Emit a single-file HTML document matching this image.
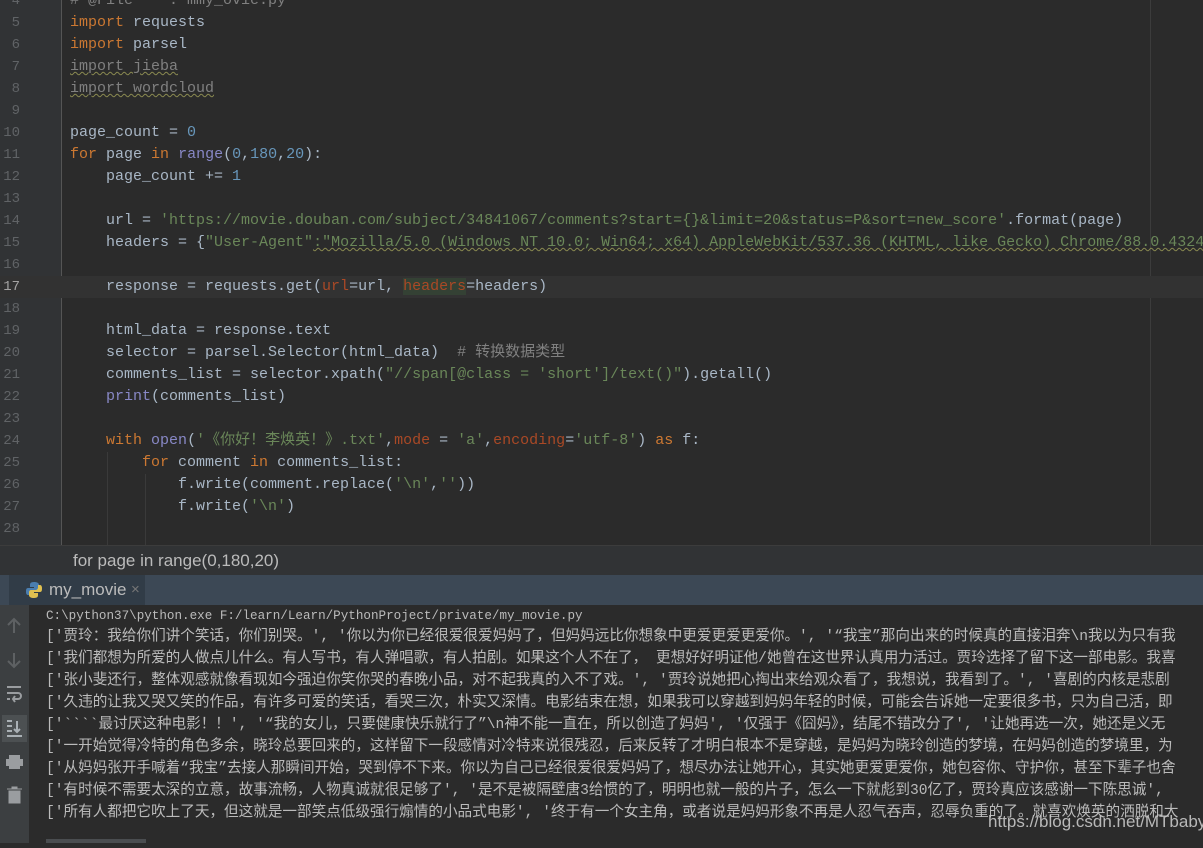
<!DOCTYPE html>
<html><head><meta charset="utf-8"><style>
*{margin:0;padding:0;box-sizing:border-box}
body{width:1203px;height:843px;overflow:hidden;background:#2b2b2b;position:relative;font-family:"Liberation Mono","Noto Sans CJK SC",monospace}
#ed{position:absolute;left:0;top:0;width:1203px;height:545px;background:#2b2b2b;overflow:hidden}
#gut{position:absolute;left:0;top:0;width:62px;height:545px;background:#313335;border-right:1px solid #555}
.l{position:absolute;left:0;height:22px;width:1203px;font-size:15px;line-height:22px;white-space:pre;color:#a9b7c6}
.n{position:absolute;left:0;width:20px;text-align:right;color:#606366;font-size:14px}
.c{position:absolute;left:70px}
.k{color:#cc7832}.s{color:#6a8759}.d{color:#6897bb}.b{color:#8888c6}.m{color:#808080}.p{color:#aa4926}
.cur{background:#323232}.cur .n{color:#a4a3a3}
.wv{text-decoration:underline wavy #8a8a50;text-decoration-thickness:1px}
#bc{position:absolute;left:0;top:545px;width:1203px;height:30px;background:#313335;border-top:1px solid #3c3c3c;color:#bbb;font-family:"Liberation Sans",sans-serif;font-size:17px;line-height:30px;padding-left:73px}
#tb{position:absolute;left:0;top:575px;width:1203px;height:30px;background:#3c4855}
#tab{position:absolute;left:9px;top:0;width:136px;height:30px;background:#313c47;color:#bbb;font-family:"Liberation Sans",sans-serif;font-size:17px;line-height:30px;padding-left:40px;white-space:nowrap}
#tool{position:absolute;left:0;top:605px;width:29px;height:238px;background:#3c3f41}
#con{position:absolute;left:29px;top:605px;width:1174px;height:238px;background:#2b2b2b;overflow:hidden}
.r{position:absolute;left:17px;white-space:pre;color:#bbbbbb;font-size:14.6px;line-height:22px}
#wm{position:absolute;left:988px;top:812px;color:#c8c8c8;font-family:"Liberation Sans",sans-serif;font-size:17px;opacity:.9}
</style></head><body>
<div id="ed">
<div id="gut"></div>
<div style="position:absolute;left:1150px;top:0;width:1px;height:545px;background:#3c3c3c"></div>
<div style="position:absolute;left:107px;top:452px;width:1px;height:93px;background:#3a3a3a"></div>
<div style="position:absolute;left:145px;top:474px;width:1px;height:71px;background:#3a3a3a"></div>
<div class="l" style="top:-10px"><span class="n">4</span><span class="c m"># @File    : mmy_ovie.py</span></div>
<div class="l" style="top:12px"><span class="n">5</span><span class="c"><span class="k">import</span> requests</span></div>
<div class="l" style="top:34px"><span class="n">6</span><span class="c"><span class="k">import</span> parsel</span></div>
<div class="l" style="top:56px"><span class="n">7</span><span class="c m wv">import jieba</span></div>
<div class="l" style="top:78px"><span class="n">8</span><span class="c m wv">import wordcloud</span></div>
<div class="l" style="top:100px"><span class="n">9</span></div>
<div class="l" style="top:122px"><span class="n">10</span><span class="c">page_count = <span class="d">0</span></span></div>
<div class="l" style="top:144px"><span class="n">11</span><span class="c"><span class="k">for</span> page <span class="k">in</span> <span class="b">range</span>(<span class="d">0</span>,<span class="d">180</span>,<span class="d">20</span>):</span></div>
<div class="l" style="top:166px"><span class="n">12</span><span class="c">    page_count += <span class="d">1</span></span></div>
<div class="l" style="top:188px"><span class="n">13</span></div>
<div class="l" style="top:210px"><span class="n">14</span><span class="c">    url = <span class="s">'https://movie.douban.com/subject/34841067/comments?start={}&amp;limit=20&amp;status=P&amp;sort=new_score'</span>.format(page)</span></div>
<div class="l" style="top:232px"><span class="n">15</span><span class="c">    headers = {<span class="s">"User-Agent"</span><span class="s wv">:"Mozilla/5.0 (Windows NT 10.0; Win64; x64) AppleWebKit/537.36 (KHTML, like Gecko) Chrome/88.0.4324</span></span></div>
<div class="l" style="top:254px"><span class="n">16</span></div>
<div class="l cur" style="top:276px"><span class="n">17</span><span class="c">    response = requests.get(<span class="p">url</span>=url, <span class="p" style="background:#344134">headers</span>=headers)</span></div>
<div class="l" style="top:298px"><span class="n">18</span></div>
<div class="l" style="top:320px"><span class="n">19</span><span class="c">    html_data = response.text</span></div>
<div class="l" style="top:342px"><span class="n">20</span><span class="c">    selector = parsel.Selector(html_data)  <span class="m"># 转换数据类型</span></span></div>
<div class="l" style="top:364px"><span class="n">21</span><span class="c">    comments_list = selector.xpath(<span class="s">"//span[@class = 'short']/text()"</span>).getall()</span></div>
<div class="l" style="top:386px"><span class="n">22</span><span class="c">    <span class="b">print</span>(comments_list)</span></div>
<div class="l" style="top:408px"><span class="n">23</span></div>
<div class="l" style="top:430px"><span class="n">24</span><span class="c">    <span class="k">with</span> <span class="b">open</span>(<span class="s">'《你好！李焕英！》.txt'</span>,<span class="p">mode</span> = <span class="s">'a'</span>,<span class="p">encoding</span>=<span class="s">'utf-8'</span>) <span class="k">as</span> f:</span></div>
<div class="l" style="top:452px"><span class="n">25</span><span class="c">        <span class="k">for</span> comment <span class="k">in</span> comments_list:</span></div>
<div class="l" style="top:474px"><span class="n">26</span><span class="c">            f.write(comment.replace(<span class="s">'\n'</span>,<span class="s">''</span>))</span></div>
<div class="l" style="top:496px"><span class="n">27</span><span class="c">            f.write(<span class="s">'\n'</span>)</span></div>
<div class="l" style="top:518px"><span class="n">28</span></div>
</div>
<div id="bc">for page in range(0,180,20)</div>
<div id="tb"><div id="tab">my_movie<span style="position:absolute;left:122px;top:0;color:#777;font-size:15px">×</span>
<svg style="position:absolute;left:16px;top:6px" width="18" height="18" viewBox="0 0 18 18"><path d="M9 1C5 1 5 3 5 4v2h4v1H3C1 7 1 9 1 11s1 3 2 3h2v-2c0-2 1-3 3-3h4c1 0 2-1 2-2V4c0-2-2-3-5-3z" fill="#4a7eb0"/><path d="M9 17c4 0 4-2 4-3v-2H9v-1h6c2 0 2-2 2-4s-1-3-2-3h-2v2c0 2-1 3-3 3H6c-1 0-2 1-2 2v3c0 2 2 3 5 3z" fill="#e0c050"/></svg></div></div>
<div id="tool">
<svg width="29" height="238" viewBox="0 0 29 238" fill="none" stroke="#5e6163" stroke-width="2">
<path d="M14 28V14M8 20l6-6 6 6"/>
<path d="M14 48v14M8 56l6 6 6-6"/>
<path d="M7 82h14M7 88h11a3 3 0 010 6h-5M15 91l-2 3 2 3M7 94h3" stroke="#9a9da0"/>
<rect x="2" y="110" width="25" height="27" fill="#4c5052" stroke="none"/>
<path d="M7 116h5M7 121h5M7 126h5M7 131h15M17 116v11M14 124l3 3 3-3" stroke="#a9b0b5"/>
<path d="M9 150h11v4H9zM6 154h17v7H6zM9 158h11v6H9z" fill="#9a9da0" stroke="none"/>
<path d="M7 184h15M12 184v-2h5v2M9 186h11v12H9z" fill="#9a9da0" stroke="#9a9da0" stroke-width="1"/>
</svg>
</div>
<div id="con">
<div class="r" style="top:0;font-size:12.6px">C:\python37\python.exe F:/learn/Learn/PythonProject/private/my_movie.py</div>
<div class="r" style="top:21px">['贾玲：我给你们讲个笑话，你们别哭。', '你以为你已经很爱很爱妈妈了，但妈妈远比你想象中更爱更爱更爱你。', '“我宝”那向出来的时候真的直接泪奔\n我以为只有我</div>
<div class="r" style="top:43px">['我们都想为所爱的人做点儿什么。有人写书，有人弹唱歌，有人拍剧。如果这个人不在了， 更想好好明证他/她曾在这世界认真用力活过。贾玲选择了留下这一部电影。我喜</div>
<div class="r" style="top:65px">['张小斐还行，整体观感就像看现如今强迫你笑你哭的春晚小品，对不起我真的入不了戏。', '贾玲说她把心掏出来给观众看了，我想说，我看到了。', '喜剧的内核是悲剧</div>
<div class="r" style="top:87px">['久违的让我又哭又笑的作品，有许多可爱的笑话，看哭三次，朴实又深情。电影结束在想，如果我可以穿越到妈妈年轻的时候，可能会告诉她一定要很多书，只为自己活，即</div>
<div class="r" style="top:109px">['&#96;&#96;&#96;&#96;最讨厌这种电影！！', '“我的女儿，只要健康快乐就行了”\n神不能一直在，所以创造了妈妈', '仅强于《囧妈》，结尾不错改分了', '让她再选一次，她还是义无</div>
<div class="r" style="top:131px">['一开始觉得冷特的角色多余，晓玲总要回来的，这样留下一段感情对冷特来说很残忍，后来反转了才明白根本不是穿越，是妈妈为晓玲创造的梦境，在妈妈创造的梦境里，为</div>
<div class="r" style="top:153px">['从妈妈张开手喊着“我宝”去接人那瞬间开始，哭到停不下来。你以为自己已经很爱很爱妈妈了，想尽办法让她开心，其实她更爱更爱你，她包容你、守护你，甚至下辈子也舍</div>
<div class="r" style="top:175px">['有时候不需要太深的立意，故事流畅，人物真诚就很足够了', '是不是被隔壁唐3给惯的了，明明也就一般的片子，怎么一下就彪到30亿了，贾玲真应该感谢一下陈思诚',</div>
<div class="r" style="top:197px">['所有人都把它吹上了天，但这就是一部笑点低级强行煽情的小品式电影', '终于有一个女主角，或者说是妈妈形象不再是人忍气吞声，忍辱负重的了。就喜欢焕英的洒脱和大</div>
<div style="position:absolute;left:17px;top:234px;width:100px;height:4px;background:#4a4d50"></div>
</div>
<div id="wm">https://blog.csdn.net/MTbaby</div>
</body></html>
